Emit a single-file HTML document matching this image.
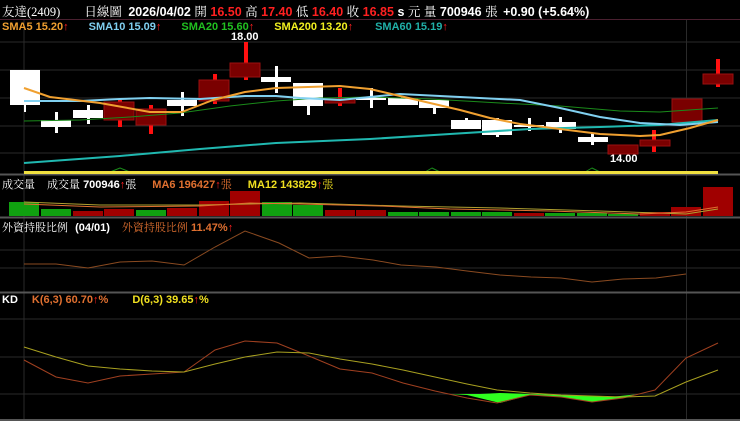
<!DOCTYPE html>
<html><head><meta charset="utf-8"><style>
body{margin:0;background:#000;width:740px;height:421px;overflow:hidden;position:relative;font-family:"Liberation Sans","Noto Sans CJK TC",sans-serif}
.t{position:absolute;white-space:nowrap;font-weight:bold}
.s{font-family:"Liberation Serif","Noto Serif CJK SC",serif;font-weight:normal}
.r{color:#ff2020}.w{color:#fff}
</style></head><body>
<svg width="740" height="421" style="position:absolute;left:0;top:0">
<g stroke="#2a2a2a" stroke-width="1">
<line x1="0" y1="42" x2="740" y2="42"/><line x1="0" y1="70" x2="740" y2="70"/><line x1="0" y1="98" x2="740" y2="98"/><line x1="0" y1="126" x2="740" y2="126"/><line x1="0" y1="153" x2="740" y2="153"/>
<line x1="0" y1="250" x2="740" y2="250"/><line x1="0" y1="268" x2="740" y2="268"/>
<line x1="0" y1="319" x2="740" y2="319"/><line x1="0" y1="357" x2="740" y2="357"/><line x1="0" y1="394" x2="740" y2="394"/>
<line x1="24" y1="19" x2="24" y2="421"/><line x1="686.5" y1="19" x2="686.5" y2="421"/>
</g>
<line x1="0" y1="19.5" x2="740" y2="19.5" stroke="#4a2030"/>
<line x1="0" y1="174.5" x2="740" y2="174.5" stroke="#555" stroke-width="2"/>
<line x1="0" y1="217.5" x2="740" y2="217.5" stroke="#555" stroke-width="2"/>
<line x1="0" y1="292.5" x2="740" y2="292.5" stroke="#555" stroke-width="2"/>
<line x1="0" y1="420" x2="740" y2="420" stroke="#555" stroke-width="2"/>
<g fill="#fff">
<rect x="24" y="105" width="2" height="7"/><rect x="10" y="70" width="30" height="35"/>
<rect x="55" y="112" width="3" height="21"/><rect x="41" y="120" width="30" height="7"/>
<rect x="87" y="105" width="3" height="19"/><rect x="73" y="110" width="30" height="8"/>
<rect x="181" y="92" width="3" height="24"/><rect x="167" y="100" width="30" height="6"/>
<rect x="275" y="66" width="3" height="27"/><rect x="261" y="77" width="30" height="5"/>
<rect x="307" y="106" width="3" height="9"/><rect x="293" y="83" width="30" height="23"/>
<rect x="370" y="88" width="3" height="20"/><rect x="356" y="97" width="30" height="3"/>
<rect x="401" y="96" width="3" height="9"/><rect x="388" y="98" width="30" height="7"/>
<rect x="433" y="100" width="3" height="14"/><rect x="419" y="100" width="30" height="8"/>
<rect x="465" y="118" width="3" height="4"/><rect x="451" y="120" width="30" height="9"/>
<rect x="496" y="118" width="3" height="19"/><rect x="482" y="120" width="30" height="15"/>
<rect x="528" y="118" width="3" height="13"/><rect x="514" y="125" width="30" height="2"/>
<rect x="559" y="117" width="3" height="16"/><rect x="546" y="122" width="30" height="7"/>
<rect x="591" y="133" width="3" height="12"/><rect x="578" y="137" width="30" height="5"/>
</g>
<g fill="#ff1010">
<rect x="118" y="100" width="4" height="27"/><rect x="149" y="105" width="4" height="29"/>
<rect x="213" y="74" width="4" height="30"/><rect x="244" y="42" width="4" height="38"/>
<rect x="338" y="88" width="4" height="18"/><rect x="652" y="130" width="4" height="22"/>
<rect x="716" y="59" width="4" height="28"/>
</g>
<g fill="#7a0000" stroke="#9a1010" stroke-width="1">
<rect x="104" y="102" width="30" height="18"/><rect x="136" y="109" width="30" height="16"/>
<rect x="199" y="80" width="30" height="21"/><rect x="230" y="63" width="30" height="14"/>
<rect x="325" y="99" width="30" height="4"/><rect x="608" y="145" width="30" height="9"/>
<rect x="640" y="140" width="30" height="6"/><rect x="672" y="99" width="30" height="23"/>
<rect x="703" y="74" width="30" height="10"/>
</g>
<g fill="none" stroke-linejoin="round">
<polyline stroke="#1a8a1a" stroke-width="1" points="24,121 80,120 130,117 180,113 230,106 276,101 320,98 370,97 430,99 500,103 560,106 620,111 660,112 718,108"/>
<polyline stroke="#20b8b0" stroke-width="2" points="24,163 120,156 200,149 276,143 370,139 450,134 530,129 600,127 660,125 718,120"/>
<polyline stroke="#80d0f0" stroke-width="2" points="24,101 80,101 120,99 150,98 200,99 245,96 276,96 300,98 340,100 370,97 400,94 460,97 520,100 560,108 600,117 640,123 680,125 718,122"/>
<polyline stroke="#f0a030" stroke-width="2" points="24,88 50,97 100,103 150,112 182,112 213,100 245,92 276,88 308,87 340,86 370,89 400,96 430,103 460,110 490,118 520,124 560,129 600,134 640,136 660,135 690,128 718,120"/>
<polyline stroke="#1a8a1a" stroke-width="1" points="110,172 120,168 130,172"/>
<polyline stroke="#1a8a1a" stroke-width="1" points="425,172 432,168 440,172"/>
<polyline stroke="#1a8a1a" stroke-width="1" points="585,172 592,168 600,172"/>
</g>
<line x1="24" y1="172.5" x2="718" y2="172.5" stroke="#f0e040" stroke-width="3"/>
<g>
<rect x="9" y="202" width="30" height="14" fill="#10a010"/><rect x="41" y="209" width="30" height="7" fill="#10a010"/>
<rect x="73" y="211" width="30" height="5" fill="#a00000"/><rect x="104" y="209" width="30" height="7" fill="#a00000"/>
<rect x="136" y="210" width="30" height="6" fill="#10a010"/><rect x="167" y="208" width="30" height="8" fill="#a00000"/>
<rect x="199" y="201" width="30" height="15" fill="#a00000"/><rect x="230" y="191" width="30" height="25" fill="#a00000"/>
<rect x="262" y="202" width="30" height="14" fill="#10a010"/><rect x="293" y="205" width="30" height="11" fill="#10a010"/>
<rect x="325" y="210" width="30" height="6" fill="#a00000"/><rect x="356" y="210" width="30" height="6" fill="#a00000"/>
<rect x="388" y="212" width="30" height="4" fill="#10a010"/><rect x="419" y="212" width="30" height="4" fill="#10a010"/>
<rect x="451" y="212" width="30" height="4" fill="#10a010"/><rect x="482" y="212" width="30" height="4" fill="#10a010"/>
<rect x="514" y="213" width="30" height="3" fill="#a00000"/><rect x="545" y="213" width="30" height="3" fill="#10a010"/>
<rect x="577" y="213" width="30" height="3" fill="#10a010"/><rect x="608" y="214" width="30" height="2" fill="#10a010"/>
<rect x="640" y="212" width="30" height="4" fill="#a00000"/><rect x="671" y="207" width="30" height="9" fill="#a00000"/>
<rect x="703" y="187" width="30" height="29" fill="#a00000"/>
<polyline fill="none" stroke="#b0a030" stroke-width="1" points="24,202 100,205 200,205 300,203 400,206 500,208 600,211 686,214 718,209"/>
<polyline fill="none" stroke="#e07030" stroke-width="1" points="24,204 100,207 200,206 250,203 300,204 380,206 450,209 550,211 640,214 686,212 718,207"/>
</g>
<polyline fill="none" stroke="#8a4a20" stroke-width="1" points="24,264 56,264 88,268 120,262 152,261 184,265 215,247 245,231 279,243 309,258 340,256 373,260 401,265 436,267 467,271 500,275 531,277 561,278 592,282 623,279 656,278 686,274"/>
<polygon fill="#30ff20" points="450,394 467,395 500,403 530,395 561,397 592,402 623,398 640,394 610,397 592,396 561,395 530,394 500,393 480,394"/>
<polyline fill="none" stroke="#a04020" stroke-width="1" points="24,360 56,377 88,383 120,376 152,374 184,372 215,350 245,341 277,343 309,356 340,369 372,373 403,383 435,391 467,398 497,403 530,395 561,397 592,402 623,398 655,390 686,358 718,343"/>
<polyline fill="none" stroke="#a8a020" stroke-width="1" points="24,347 56,357 88,366 120,369 152,371 184,372 215,364 245,357 277,352 309,353 340,359 372,364 403,370 435,377 467,384 497,390 530,393 561,395 592,396 623,397 655,396 686,382 718,370"/>
</svg>
<div class="t" style="left:2px;top:2px;font-size:12.5px"><span class="s w">友達(2409)</span><span class="s w" style="margin-left:24px">日線圖</span> <span class="w" style="margin-left:3px">2026/04/02</span> <span class="s w">開</span> <span class="r">16.50</span> <span class="s w">高</span> <span class="r">17.40</span> <span class="s w">低</span> <span class="r">16.40</span> <span class="s w">收</span> <span class="r">16.85</span> <span class="w">s</span> <span class="s w">元</span> <span class="s w">量</span> <span class="w">700946</span> <span class="s w">張</span> <span class="w" style="margin-left:2px">+0.90 (+5.64%)</span></div>
<div class="t" style="left:2px;top:21px;font-size:11px"><span style="color:#f0a030">SMA5 15.20</span><span class="r">↑</span><span style="color:#80d0f0;margin-left:20px">SMA10 15.09</span><span class="r">↑</span><span style="color:#20c020;margin-left:20px">SMA20 15.60</span><span class="r">↑</span><span style="color:#f0f020;margin-left:20px">SMA200 13.20</span><span class="r">↑</span><span style="color:#20b0a8;margin-left:22px">SMA60 15.19</span><span class="r">↑</span></div>
<div class="t w" style="left:231px;top:31px;font-size:11px">18.00</div>
<div class="t w" style="left:610px;top:153px;font-size:11px">14.00</div>
<div class="t" style="left:2px;top:176px;font-size:11px"><span class="s w">成交量</span><span class="s w" style="margin-left:12px">成交量</span> <span class="w">700946</span><span class="r">↑</span><span class="s w">張</span><span style="color:#e07030;margin-left:16px">MA6 196427</span><span class="r">↑</span><span class="s" style="color:#e07030">張</span><span style="color:#f0e020;margin-left:16px">MA12 143829</span><span class="r">↑</span><span class="s" style="color:#f0e020">張</span></div>
<div class="t" style="left:2px;top:219px;font-size:11px"><span class="s w">外資持股比例</span> <span class="w" style="margin-left:4px">(04/01)</span><span class="s" style="color:#e07030;margin-left:12px">外資持股比例</span> <span style="color:#e07030">11.47%</span><span class="r">↑</span></div>
<div class="t" style="left:2px;top:294px;font-size:11px"><span class="w">KD</span><span style="color:#e07030;margin-left:14px">K(6,3) 60.70</span><span class="r">↑</span><span style="color:#e07030">%</span><span style="color:#f0e020;margin-left:24px">D(6,3) 39.65</span><span class="r">↑</span><span style="color:#f0e020">%</span></div>
</body></html>
